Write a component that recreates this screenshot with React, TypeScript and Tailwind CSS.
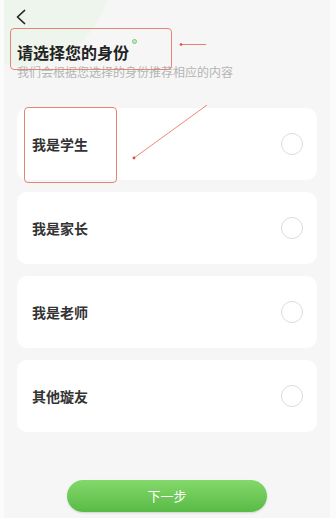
import { useState } from 'react';

const options = ['我是学生', '我是家长', '我是老师', '其他璇友'];

export default function App() {
  const [selected, setSelected] = useState<number | null>(null);

  return (
    <div
      className="relative w-[336px] h-[518px] overflow-hidden bg-[#fbfbfb] flex"
      style={{ fontFamily: '"Noto Sans CJK SC", "Noto Sans", sans-serif' }}
    >
      <div className="relative ml-[4px] mr-[6px] flex-1 bg-[#f6f6f6] overflow-hidden flex flex-col">
        {/* light green decoration */}
        <div className="absolute left-[-74px] top-[-114px] w-[180px] h-[180px] rounded-full bg-[#eef5ec]" />

        {/* header */}
        <div className="relative pl-[11px] pt-[9px]">
          <svg width="12" height="16" viewBox="0 0 12 16" fill="none">
            <polyline points="9.5,1.5 2.5,8 9.5,14.5" stroke="#222" strokeWidth="1.7" strokeLinecap="round" strokeLinejoin="round" />
          </svg>
        </div>
        <div className="relative pl-[13px] mt-[17px]">
          <h1 className="text-[16px] leading-[20px] font-bold text-[#222]">请选择您的身份</h1>
          <p className="mt-[2px] text-[12px] leading-[16px] text-[#b4b4b4]">我们会根据您选择的身份推荐相应的内容</p>
        </div>

        {/* options */}
        <div className="relative mt-[28px] mx-[13px] flex flex-col gap-3">
          {options.map((label, i) => (
            <button
              key={label}
              onClick={() => setSelected(i)}
              className="h-[72px] bg-white rounded-[10px] flex items-center justify-between pl-[15px] pr-[14px]"
            >
              <span className="text-[14px] font-bold text-[#333]">{label}</span>
              <span
                className={`w-[22px] h-[22px] rounded-full border ${
                  selected === i ? 'border-[#62c24f] bg-[#62c24f]' : 'border-[#dcdcdc]'
                }`}
              />
            </button>
          ))}
        </div>

        <div className="flex-1" />
        <div className="relative flex justify-center pb-[6px]">
          <button className="w-[200px] h-[32px] rounded-full bg-gradient-to-b from-[#84d86b] to-[#58bb45] text-white text-[13px] shadow-[0_1px_2px_rgba(0,0,0,0.15)]">
            下一步
          </button>
        </div>

        {/* green dot after title */}
        <span className="absolute left-[128px] top-[39px] w-[5px] h-[5px] rounded-full border border-[#7cc47a] bg-[#c8e8c4]" />
      </div>

      {/* annotation overlays */}
      <div className="absolute left-[10px] top-[28px] w-[162px] h-[42px] border border-[#e58576] rounded-[4px]" />
      <div className="absolute left-[24px] top-[107px] w-[93px] h-[76px] border border-[#e58576] rounded-[4px]" />
      <svg className="absolute left-0 top-0" width="336" height="518" viewBox="0 0 336 518" fill="none">
        <line x1="180" y1="44.5" x2="206" y2="44.5" stroke="#e8806f" strokeWidth="1" />
        <circle cx="181" cy="44.5" r="1.3" fill="#d9503f" />
        <line x1="207" y1="105" x2="134" y2="158" stroke="#eb8a7a" strokeWidth="1" />
        <circle cx="134" cy="158" r="1.4" fill="#d9503f" />
      </svg>
    </div>
  );
}
